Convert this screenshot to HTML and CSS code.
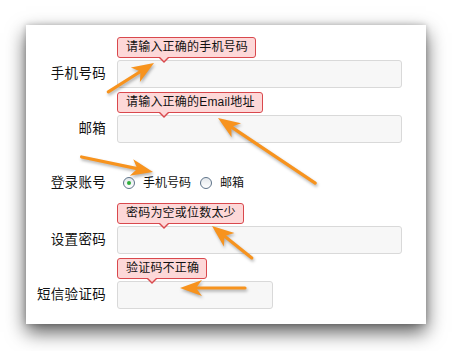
FILE: index.html
```html
<!DOCTYPE html>
<html lang="zh-CN">
<head>
  <meta charset="UTF-8">
  <title>注册</title>
  <link rel="stylesheet" href="styles.css">
</head>
<body>
  <div class="card">
    <div class="row">
      <label class="label">手机号码</label>
      <div class="field">
        <div class="tip">请输入正确的手机号码</div>
        <input class="input" type="text">
      </div>
    </div>

    <div class="row">
      <label class="label">邮箱</label>
      <div class="field">
        <div class="tip">请输入正确的Email地址</div>
        <input class="input" type="text">
      </div>
    </div>

    <div class="row radio-row">
      <label class="label">登录账号</label>
      <div class="radios">
        <span class="radio checked"></span><span class="radio-text">手机号码</span>
        <span class="radio"></span><span class="radio-text">邮箱</span>
      </div>
    </div>

    <div class="row">
      <label class="label">设置密码</label>
      <div class="field">
        <div class="tip">密码为空或位数太少</div>
        <input class="input" type="password">
      </div>
    </div>

    <div class="row">
      <label class="label">短信验证码</label>
      <div class="field">
        <div class="tip tip-short">验证码不正确</div>
        <input class="input input-short" type="text">
      </div>
    </div>
  </div>

  <!-- annotation arrows drawn over the form -->
  <svg class="arrows" width="452" height="351" viewBox="0 0 452 351">
    <g fill="#f7931e" stroke="#f7931e">
      <g transform="translate(154 63) rotate(-32.2)">
        <line x1="-54" y1="0" x2="-15" y2="0" stroke-width="3.2" stroke-linecap="round"/>
        <polygon points="0,0 -22,-8.5 -16,0 -22,8.5" stroke="none"/>
      </g>
      <g transform="translate(218 118) rotate(-146.2)">
        <line x1="-117" y1="0" x2="-15" y2="0" stroke-width="3.2" stroke-linecap="round"/>
        <polygon points="0,0 -22,-8.5 -16,0 -22,8.5" stroke="none"/>
      </g>
      <g transform="translate(153 172) rotate(11.9)">
        <line x1="-73" y1="0" x2="-15" y2="0" stroke-width="3.2" stroke-linecap="round"/>
        <polygon points="0,0 -22,-8.5 -16,0 -22,8.5" stroke="none"/>
      </g>
      <g transform="translate(212 226) rotate(-141.3)">
        <line x1="-51" y1="0" x2="-15" y2="0" stroke-width="3.2" stroke-linecap="round"/>
        <polygon points="0,0 -22,-8.5 -16,0 -22,8.5" stroke="none"/>
      </g>
      <g transform="translate(180 288) rotate(180)">
        <line x1="-65" y1="0" x2="-15" y2="0" stroke-width="3.2" stroke-linecap="round"/>
        <polygon points="0,0 -22,-8 -16,0 -22,8" stroke="none"/>
      </g>
    </g>
  </svg>
</body>
</html>
```

FILE: styles.css
```css
* {
  box-sizing: border-box;
}

body {
  margin: 0;
  background: #fff;
  font-family: "Liberation Sans", "Noto Sans CJK SC", sans-serif;
  color: #111;
  width: 452px;
  height: 351px;
  position: relative;
  overflow: hidden;
}

.card {
  position: absolute;
  left: 26px;
  top: 25px;
  width: 400px;
  height: 299px;
  background: #fff;
  padding-top: 12px;
  box-shadow: 0 8px 18px rgba(0, 0, 0, 0.65), 0 0 6px rgba(0, 0, 0, 0.2);
}

.row {
  display: flex;
  align-items: flex-end;
  margin-bottom: 4px;
}

.label {
  width: 80px;
  margin-right: 11px;
  text-align: right;
  font-size: 13.5px;
  line-height: 28px;
  letter-spacing: 0.3px;
  color: #111;
}

.field {
  display: flex;
  flex-direction: column;
  align-items: flex-start;
}

.tip {
  position: relative;
  height: 21px;
  line-height: 19px;
  padding: 0 7px 0 8px;
  margin-bottom: 2px;
  font-size: 12px;
  letter-spacing: 0.2px;
  color: #111;
  background: #fdd8d8;
  border: 1px solid #d9484d;
  border-radius: 3px;
  z-index: 1;
}

.tip::before,
.tip::after {
  content: "";
  position: absolute;
  left: 40px;
  width: 0;
  height: 0;
  border-style: solid;
}

.tip::before {
  bottom: -6px;
  border-width: 6px 6px 0 6px;
  border-color: #d9484d transparent transparent transparent;
}

.tip::after {
  bottom: -4px;
  left: 41px;
  border-width: 5px 5px 0 5px;
  border-color: #fdd8d8 transparent transparent transparent;
}

.tip-short::before {
  left: 28px;
}

.tip-short::after {
  left: 29px;
}

.input {
  width: 285px;
  height: 28px;
  margin: 0;
  background: #f7f7f7;
  border: 1px solid #d9d9d9;
  border-radius: 3px;
  outline: none;
}

.input-short {
  width: 156px;
}

.radio-row {
  margin-top: 32px;
  margin-bottom: 12px;
  align-items: center;
}

.radio-row .label {
  line-height: 16px;
}

.radios {
  display: flex;
  align-items: center;
  padding-left: 6px;
}

.radio {
  width: 12px;
  height: 12px;
  border-radius: 50%;
  border: 1px solid #5e7389;
  background: linear-gradient(#e4e8ec, #fff);
  position: relative;
}

.radio.checked::after {
  content: "";
  position: absolute;
  left: 3px;
  top: 3px;
  width: 4px;
  height: 4px;
  border-radius: 50%;
  background: #2fae3c;
}

.radio-text {
  font-size: 12px;
  margin-left: 8px;
  margin-right: 9px;
  line-height: 16px;
}

.arrows {
  position: absolute;
  left: 0;
  top: 0;
  pointer-events: none;
  filter: drop-shadow(1px 2px 1.5px rgba(0, 0, 0, 0.3));
}
```
